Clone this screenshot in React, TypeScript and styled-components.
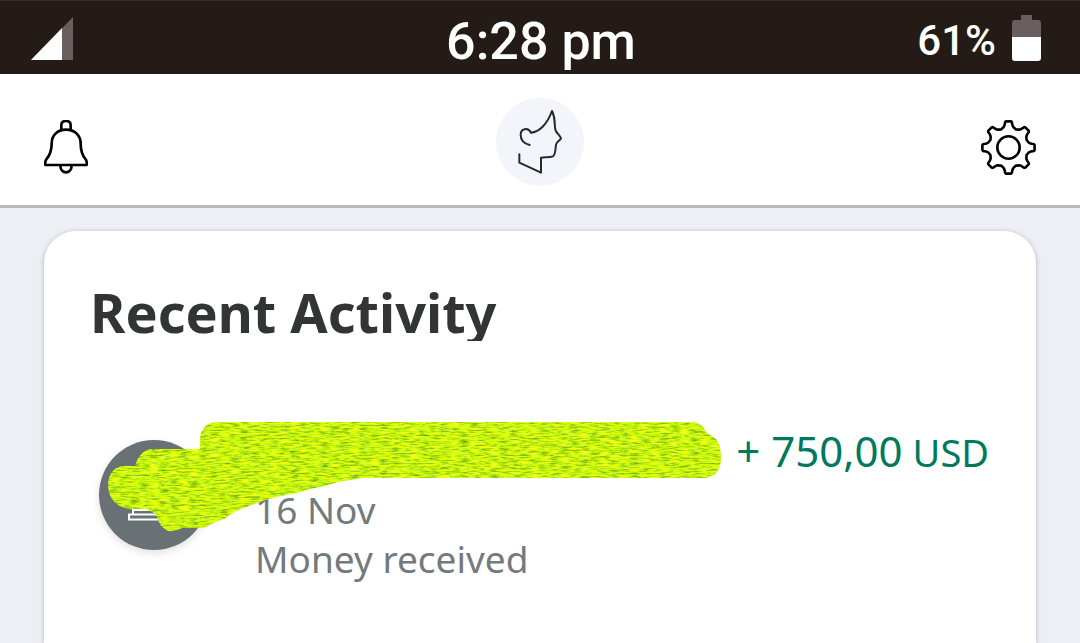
import React from "react";
import styled, { createGlobalStyle } from "styled-components";

const Global = createGlobalStyle`
  *, *::before, *::after { box-sizing: border-box; }
  body { margin: 0; background: #eeeff4; font-family: "Noto Sans", "Open Sans", sans-serif; }
`;

const Page = styled.div`
  display: flex;
  flex-direction: column;
  height: 100vh;
  overflow: hidden;
`;

const StatusBar = styled.div`
  display: grid;
  grid-template-columns: 1fr auto 1fr;
  align-items: center;
  flex: none;
  height: 74px;
  padding: 2px 39px 0 31px;
  border-top: 1px solid #332c29;
  background: #241b17;
  color: #fff;
  font-family: Roboto, sans-serif;
  font-weight: 500;
`;

const Clock = styled.time`
  padding: 6px 0 0 10px;
  font-size: 52px;
  line-height: 64px;
`;

const Battery = styled.div`
  display: flex;
  justify-content: flex-end;
  align-items: center;
  gap: 16px;
  font-size: 42px;
  line-height: 64px;
`;

const Percent = styled.span`
  padding-top: 4px;
`;

const Header = styled.header`
  display: flex;
  justify-content: space-between;
  align-items: center;
  flex: none;
  padding: 24px 44px 19px;
  border-bottom: 3px solid #b4bcbc;
  background: #fff;
`;

const IconButton = styled.button`
  display: flex;
  width: 56px;
  margin-top: 10px;
  padding: 0;
  border: 0;
  background: none;
  justify-content: ${(p: { $end?: boolean }) => (p.$end ? "flex-end" : "flex-start")};
  cursor: pointer;
`;

const Profile = styled.button`
  display: flex;
  padding: 0;
  border: 0;
  border-radius: 50%;
  background: #f4f5fa;
  cursor: pointer;
`;

const Card = styled.main`
  flex: 1;
  margin: 23px 44px 0;
  padding: 51px 47px 0 46px;
  border-radius: 32px 32px 0 0;
  background: #fff;
  box-shadow: 0 1px 5px rgba(40, 44, 60, 0.3);
`;

const Title = styled.h1`
  height: 59px;
  margin: 0;
  overflow: hidden;
  color: #333436;
  font-size: 54px;
  font-weight: 700;
  line-height: 60px;
`;

const Activity = styled.article`
  position: relative;
  display: flex;
  gap: 46px;
  margin-top: 81px;
  padding-left: 9px;
`;

const Badge = styled.div`
  flex: none;
  width: 110px;
  height: 110px;
  margin-top: 18px;
  border-radius: 50%;
  background: #697174;
  box-shadow: 0 3px 8px rgba(0, 0, 0, 0.12);
`;

const Details = styled.div`
  flex: 1;
  color: #737a7d;
  font-size: 37px;
  line-height: 49px;
`;

const Amount = styled.div`
  display: flex;
  justify-content: flex-end;
  align-items: baseline;
  gap: 10px;
  height: 63px;
  color: #00795c;
  font-size: 42px;
  line-height: 58px;
`;

const Currency = styled.span`
  font-size: 38px;
`;

const Line = styled.div``;

const Redaction = styled.svg`
  position: absolute;
  top: 0;
  left: 17px;
`;

const SignalIcon = () => (
  <svg width="42" height="43" viewBox="0 0 42 43" aria-label="Signal">
    <path d="M42 0V43H0Z" fill="#695f5f" />
    <path d="M31 11V43H0Z" fill="#fff" />
  </svg>
);

const BatteryIcon = () => (
  <svg width="29" height="47" viewBox="0 0 29 47" aria-label="Battery">
    <path d="M9 0h11v5h6q3 0 3 3v14H0V8q0-3 3-3h6z" fill="#695f5f" />
    <path d="M0 22h29v21q0 3-3 3H3q-3 0-3-3z" fill="#fff" />
  </svg>
);

const BellIcon = () => (
  <svg width="44" height="54" viewBox="132 360 132 162" fill="none" stroke="#000" strokeWidth="8" strokeLinejoin="round">
    <path d="M184 389V376Q184 363 198 363Q212 363 212 376V389" />
    <path d="M198 389C171 389 155 407 155 431C155 455 149 466 139 478C135 484 135 489 136 495H260C261 489 261 484 257 478C247 466 242 455 242 431C242 407 225 389 198 389Z" />
    <path d="M181 496C181 524 215 524 215 496" />
  </svg>
);

const FaceIcon = () => (
  <svg width="88" height="88" viewBox="198 293 264 264" fill="none" stroke="#29292b" strokeWidth="6" strokeLinecap="round" strokeLinejoin="round">
    <path d="M299 434C281 429 272 417 272 403C272 384 294 380 303 397C328 395 352 371 366 332C380 360 370 378 378 393C384 402 391 407 393 414C391 420 379 425 378 433C376 448 377 461 369 468C359 472 344 470 333 472V517L268 487V462" />
  </svg>
);

const polar = (radius: number, degrees: number) => {
  const a = (degrees * Math.PI) / 180;
  return `${(radius * Math.sin(a)).toFixed(2)} ${(-radius * Math.cos(a)).toFixed(2)}`;
};

const gearPath =
  Array.from({ length: 8 }, (_, i) => {
    const t = i * 45;
    return [
      `${i ? "L" : "M"}${polar(20.8, t - 14)}`,
      `Q${polar(21.8, t - 11)} ${polar(23.6, t - 9)}`,
      `Q${polar(26.2, t - 8)} ${polar(26.2, t - 5)}`,
      `L${polar(26.2, t + 5)}`,
      `Q${polar(26.2, t + 8)} ${polar(23.6, t + 9)}`,
      `Q${polar(21.8, t + 11)} ${polar(20.8, t + 14)}`,
      `L${polar(19.6, t + 22.5)}`,
    ].join("");
  }).join("") + "Z";

const GearIcon = () => (
  <svg width="56" height="56" viewBox="-28.500 -28.500 56 56" fill="none" stroke="#000" strokeWidth="2.6" strokeLinejoin="round">
    <path d={gearPath} />
    <circle r="11.2" />
  </svg>
);

const BankIcon = () => (
  <svg width="110" height="110" viewBox="0 0 110 110" fill="none" stroke="#fff" strokeWidth="2">
    <path d="M30 74.500H79V79.500H30ZM34 74V70H75V74M37 70V44M47 70V44M62 70V44M72 70V44M29 43L55 29L80 43Z" />
  </svg>
);

const Scribble = () => (
  <Redaction width="614" height="110" viewBox="107 422 614 110" aria-hidden="true">
    <defs>
      <filter id="streaks" x="0" y="0" width="100%" height="100%" colorInterpolationFilters="sRGB">
        <feTurbulence type="fractalNoise" baseFrequency="0.1 0.6" numOctaves="3" seed="4" result="noise" />
        <feColorMatrix
          in="noise"
          values="0.9 0 0 0 0.32
                  0.8 0 0 0 0.56
                  0 0.4 0 0 -0.14
                  0 0 0 0 1"
        />
        <feComposite in2="SourceGraphic" operator="in" />
      </filter>
    </defs>
    <path
      filter="url(#streaks)"
      fill="#c5fa05"
      d="M213 422H694Q702 423 706 432L716 439Q721 446 721 457Q721 477 704 478H362L350 480L338 482L325 486L310 489L296 493L281 496L265 500L249 506L236 511L224 519L213 523L204 528H182Q175 532 168 531Q159 527 156 514L146 509H131Q118 508 112 499Q108 493 108 483Q109 470 121 466H135Q138 453 150 449H200V438Q201 426 213 422Z"
    />
  </Redaction>
);

export default function App() {
  return (
    <>
      <Global />
      <Page>
        <StatusBar>
          <SignalIcon />
          <Clock>6:28 pm</Clock>
          <Battery>
            <Percent>61%</Percent>
            <BatteryIcon />
          </Battery>
        </StatusBar>
        <Header>
          <IconButton aria-label="Notifications">
            <BellIcon />
          </IconButton>
          <Profile aria-label="Profile">
            <FaceIcon />
          </Profile>
          <IconButton $end aria-label="Settings">
            <GearIcon />
          </IconButton>
        </Header>
        <Card>
          <Title>Recent Activity</Title>
          <Activity>
            <Badge>
              <BankIcon />
            </Badge>
            <Details>
              <Amount>
                <span>+ 750,00</span>
                <Currency>USD</Currency>
              </Amount>
              <Line>16 Nov</Line>
              <Line>Money received</Line>
            </Details>
            <Scribble />
          </Activity>
        </Card>
      </Page>
    </>
  );
}
